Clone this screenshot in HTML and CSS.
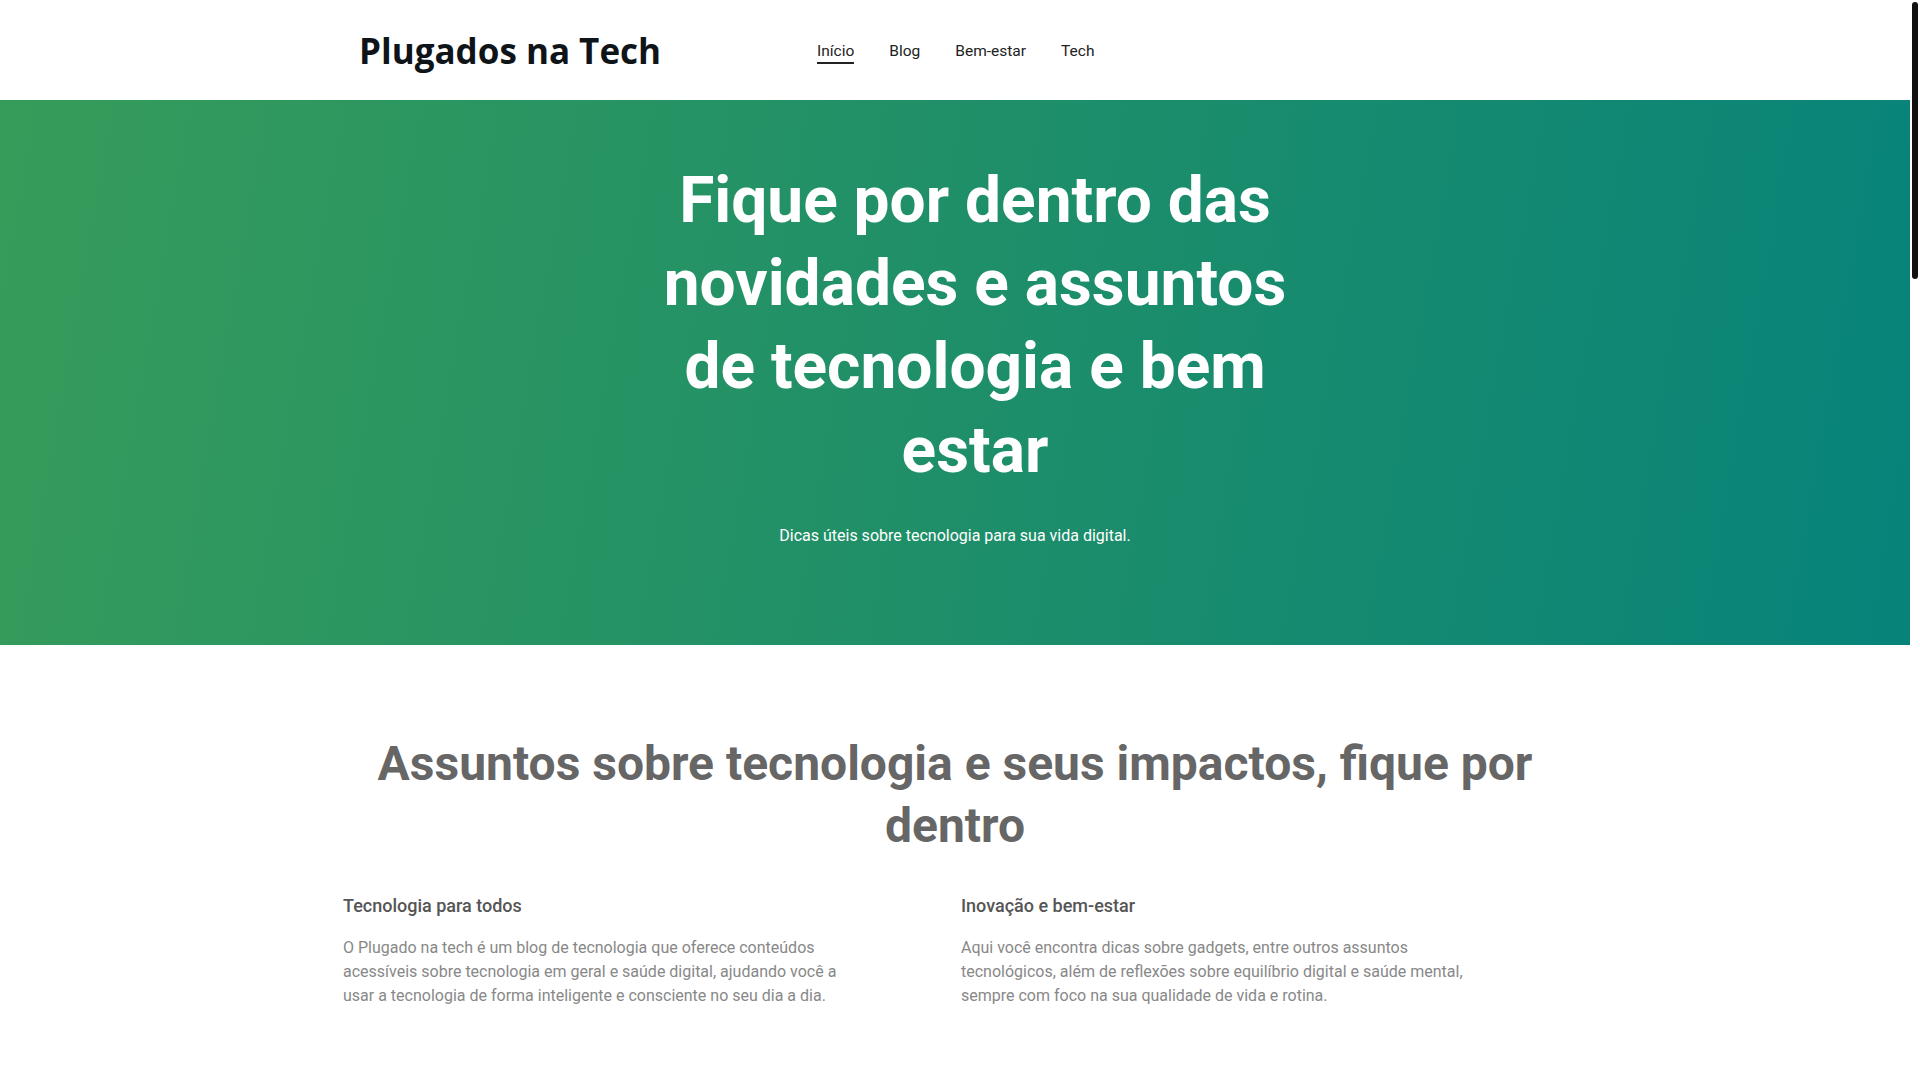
FILE: index.html
```html
<!DOCTYPE html>
<html lang="pt-BR">
<head>
<meta charset="utf-8">
<title>Plugados na Tech</title>
<link rel="stylesheet" href="styles.css">
</head>
<body>
<div class="scroll-thumb"></div>
<div class="page">
  <header class="site-header">
    <div class="header-inner">
      <a class="logo" href="#">Plugados na Tech</a>
      <nav class="main-nav">
        <a class="nav-link active" href="#">Início</a>
        <a class="nav-link" href="#">Blog</a>
        <a class="nav-link" href="#">Bem-estar</a>
        <a class="nav-link" href="#">Tech</a>
      </nav>
    </div>
  </header>
  <section class="hero">
    <h1 class="hero-title">Fique por dentro das novidades e assuntos de tecnologia e bem estar</h1>
    <p class="hero-sub">Dicas úteis sobre tecnologia para sua vida digital.</p>
  </section>
  <section class="topics">
    <div class="container">
      <h2 class="topics-title">Assuntos sobre tecnologia e seus impactos, fique por dentro</h2>
      <div class="topics-grid">
        <article class="topic">
          <h3 class="topic-title">Tecnologia para todos</h3>
          <p class="topic-text">O Plugado na tech é um blog de tecnologia que oferece conteúdos acessíveis sobre tecnologia em geral e saúde digital, ajudando você a usar a tecnologia de forma inteligente e consciente no seu dia a dia.</p>
        </article>
        <article class="topic">
          <h3 class="topic-title">Inovação e bem-estar</h3>
          <p class="topic-text">Aqui você encontra dicas sobre gadgets, entre outros assuntos tecnológicos, além de reflexões sobre equilíbrio digital e saúde mental, sempre com foco na sua qualidade de vida e rotina.</p>
        </article>
      </div>
    </div>
  </section>
  <div class="page-rest"></div>
</div>
</body>
</html>
```
FILE: styles.css
```css
html::-webkit-scrollbar {
  width: 0;
  height: 0;
}

* {
  box-sizing: border-box;
}

body {
  margin: 0;
  font-family: Roboto, "Liberation Sans", Arial, sans-serif;
  background: #ffffff;
  color: #222222;
}

.page {
  width: 1910px;
}

.scroll-thumb {
  position: fixed;
  top: 2px;
  right: 2px;
  width: 6px;
  height: 277px;
  background: #111111;
  border-radius: 3px;
  z-index: 10;
}

a {
  text-decoration: none;
  color: inherit;
}

.site-header {
  height: 100px;
  background: #ffffff;
}

.header-inner {
  height: 100%;
  display: flex;
  align-items: center;
  padding-left: 359px;
}

.logo {
  font-family: "Open Sans", "Liberation Sans", sans-serif;
  font-weight: 700;
  font-size: 35px;
  color: #0f1419;
  width: 458px;
}

.main-nav {
  display: flex;
  gap: 35px;
  align-items: center;
}

.nav-link {
  font-size: 15.5px;
  line-height: 20px;
  color: #222222;
  padding: 4px 0 1px;
  border-bottom: 2px solid transparent;
}

.nav-link.active {
  border-bottom-color: #222222;
}

.hero {
  background: linear-gradient(100deg, #369c5a 0%, #1f8f69 50%, #07837a 100%);
  padding: 59px 20px 97px;
  text-align: center;
  color: #ffffff;
}

.hero-title {
  margin: 0 auto;
  max-width: 700px;
  padding-left: 40px;
  font-size: 64px;
  line-height: 1.3;
  font-weight: 700;
}

.hero-sub {
  margin: 32px 0 0;
  font-size: 16px;
  line-height: 24px;
}

.topics {
  padding: 88px 0 80px;
}

.container {
  width: 1240px;
  margin: 0 auto;
  padding: 0 8px;
}

.topics-title {
  margin: 0;
  text-align: center;
  font-size: 48px;
  line-height: 1.3;
  font-weight: 700;
  color: #666666;
}

.topics-grid {
  display: grid;
  grid-template-columns: 1fr 1fr;
  column-gap: 12px;
  margin-top: 36px;
}

.topic-title {
  margin: 0;
  font-size: 18px;
  line-height: 24px;
  font-weight: 500;
  color: #555555;
}

.topic-text {
  margin: 18px 0 0;
  max-width: 512px;
  font-size: 16px;
  line-height: 24px;
  color: #888888;
}

.page-rest {
  height: 3100px;
}
```
